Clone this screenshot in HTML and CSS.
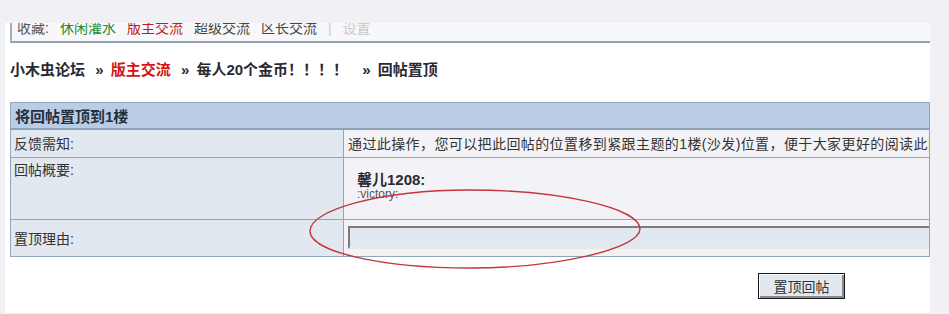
FILE: index.html
```html
<!DOCTYPE html>
<html>
	<head>
		<meta charset="UTF-8">
		<title>回帖置顶</title>
		<link rel="stylesheet" href="styles.css">
	</head>
	<body>
		<div class="topband"></div>
		<div class="page">
			<div class="favbar">
				<div class="favlinks">
					<span class="fav-label">收藏:</span>
					<a class="fav-green">休闲灌水</a>
					<a class="fav-red">版主交流</a>
					<a>超级交流</a>
					<a>区长交流</a>
					<span class="fav-sep">|</span>
					<a class="fav-off">设置</a>
				</div>
			</div>
			<div class="crumbs">
				<a>小木虫论坛</a>
				<span class="arr">»</span>
				<a class="red">版主交流</a>
				<span class="arr">»</span>
				<a>每人20个金币！！！！</a>
				<span class="arr arr-wide">»</span>
				<span>回帖置顶</span>
			</div>
			<table class="form">
				<colgroup>
					<col class="col-label">
					<col>
				</colgroup>
				<tr class="head">
					<th colspan="2">将回帖置顶到1楼</th>
				</tr>
				<tr class="r1">
					<td class="lab">反馈需知:</td>
					<td class="val nowrap">通过此操作，您可以把此回帖的位置移到紧跟主题的1楼(沙发)位置，便于大家更好的阅读此回帖。</td>
				</tr>
				<tr class="r2">
					<td class="lab top">回帖概要:</td>
					<td class="val top">
						<div class="summary">
							<div class="author">馨儿1208:</div>
							<div class="quote">:victory:</div>
						</div>
					</td>
				</tr>
				<tr class="r3">
					<td class="lab">置顶理由:</td>
					<td class="val"><input class="reason" type="text"></td>
				</tr>
			</table>
			<div class="actions">
				<button class="btn" type="button">置顶回帖</button>
			</div>
		</div>
		<svg class="mark" width="949" height="314" viewBox="0 0 949 314">
			<path d="M310,231 C310,210 380,190 470,190 C560,190 640,208 640,229 C640,248 560,268 470,268 C382,268 310,252 310,231 Z" fill="none" stroke="#c3363c" stroke-width="1.4"/>
		</svg>
	</body>
</html>
```
FILE: styles.css
```css
body{
	margin:0;
	background:#f1f1f5;
	font-family:"Liberation Sans","Noto Sans CJK SC",sans-serif;
	color:#333;
	overflow:hidden;
	position:relative;
}
.topband{
	height:23px;
}
.page{
	width:925px;
	height:290px;
	margin-left:5px;
	background:#fff;
}
.favbar{
	margin-left:5px;
	height:18px;
	overflow:hidden;
	background:#f8f8fa;
	border-left:2px solid #9fb0c0;
	border-bottom:2px solid #92a4b4;
}
.favlinks{
	display:flex;
	gap:11px;
	margin-top:-2px;
	padding-left:5px;
	font-size:14px;
	line-height:14px;
	white-space:nowrap;
	color:#444;
}
.fav-label{
	color:#555;
}
.fav-green{
	color:#22882e;
}
.fav-red{
	color:#c41a1a;
}
.fav-sep,.fav-off{
	color:#c8c8c8;
}
.crumbs{
	margin-top:17px;
	padding-left:5px;
	font-size:15px;
	font-weight:bold;
	line-height:20px;
	color:#2a2a33;
	white-space:nowrap;
}
.crumbs .arr{
	margin:0 3px 0 6px;
}
.crumbs .arr-wide{
	margin-left:10px;
}
.crumbs .red{
	color:#d21414;
}
.form{
	margin:22px 0 0 5px;
	width:920px;
	border-collapse:collapse;
	table-layout:fixed;
	font-size:14px;
	color:#333;
}
.col-label{
	width:333px;
}
.form th,.form td{
	border:1px solid #8ea7bf;
	padding:0;
	overflow:hidden;
}
.form th{
	height:25px;
	text-align:left;
	padding-left:4px;
	font-size:15px;
	background:#bacde7;
	border-bottom:2px solid #8da3ba;
	color:#26303d;
}
.lab{
	background:#e2e8f0;
	padding-left:3px !important;
}
.val{
	background:#f3f3f7;
	padding-left:4px !important;
}
.nowrap{
	white-space:nowrap;
	letter-spacing:0.4px;
}
.top{
	vertical-align:top;
}
.r1{
	height:28px;
}
.r2{
	height:62px;
}
.r2 .lab{
	padding-top:4px;
	line-height:16px;
}
.summary{
	padding:13px 0 0 9px;
}
.author{
	font-size:15px;
	font-weight:bold;
	line-height:17px;
	color:#2a2a33;
}
.quote{
	font-size:12px;
	line-height:13px;
	color:#555;
}
.r3{
	height:37px;
}
.reason{
	display:block;
	width:620px;
	height:23px;
	box-sizing:border-box;
	margin:0;
	background:#e2e8f0;
	border:2px solid #7c7c7c;
	border-right-color:#e8e8e8;
	border-bottom-color:#e8e8e8;
}
.actions{
	padding:16px 0 0 753px;
}
.btn{
	width:87px;
	height:26px;
	padding:0;
	border:1px solid #1a1a1a;
	background:#e2e8f0;
	box-shadow:inset 1px 1px 0 #fff,inset -2px -2px 0 #8a8a8a;
	font-family:"Liberation Sans","Noto Sans CJK SC",sans-serif;
	font-size:14px;
	color:#333;
}
.mark{
	position:absolute;
	top:0;
	left:0;
	pointer-events:none;
}
```
